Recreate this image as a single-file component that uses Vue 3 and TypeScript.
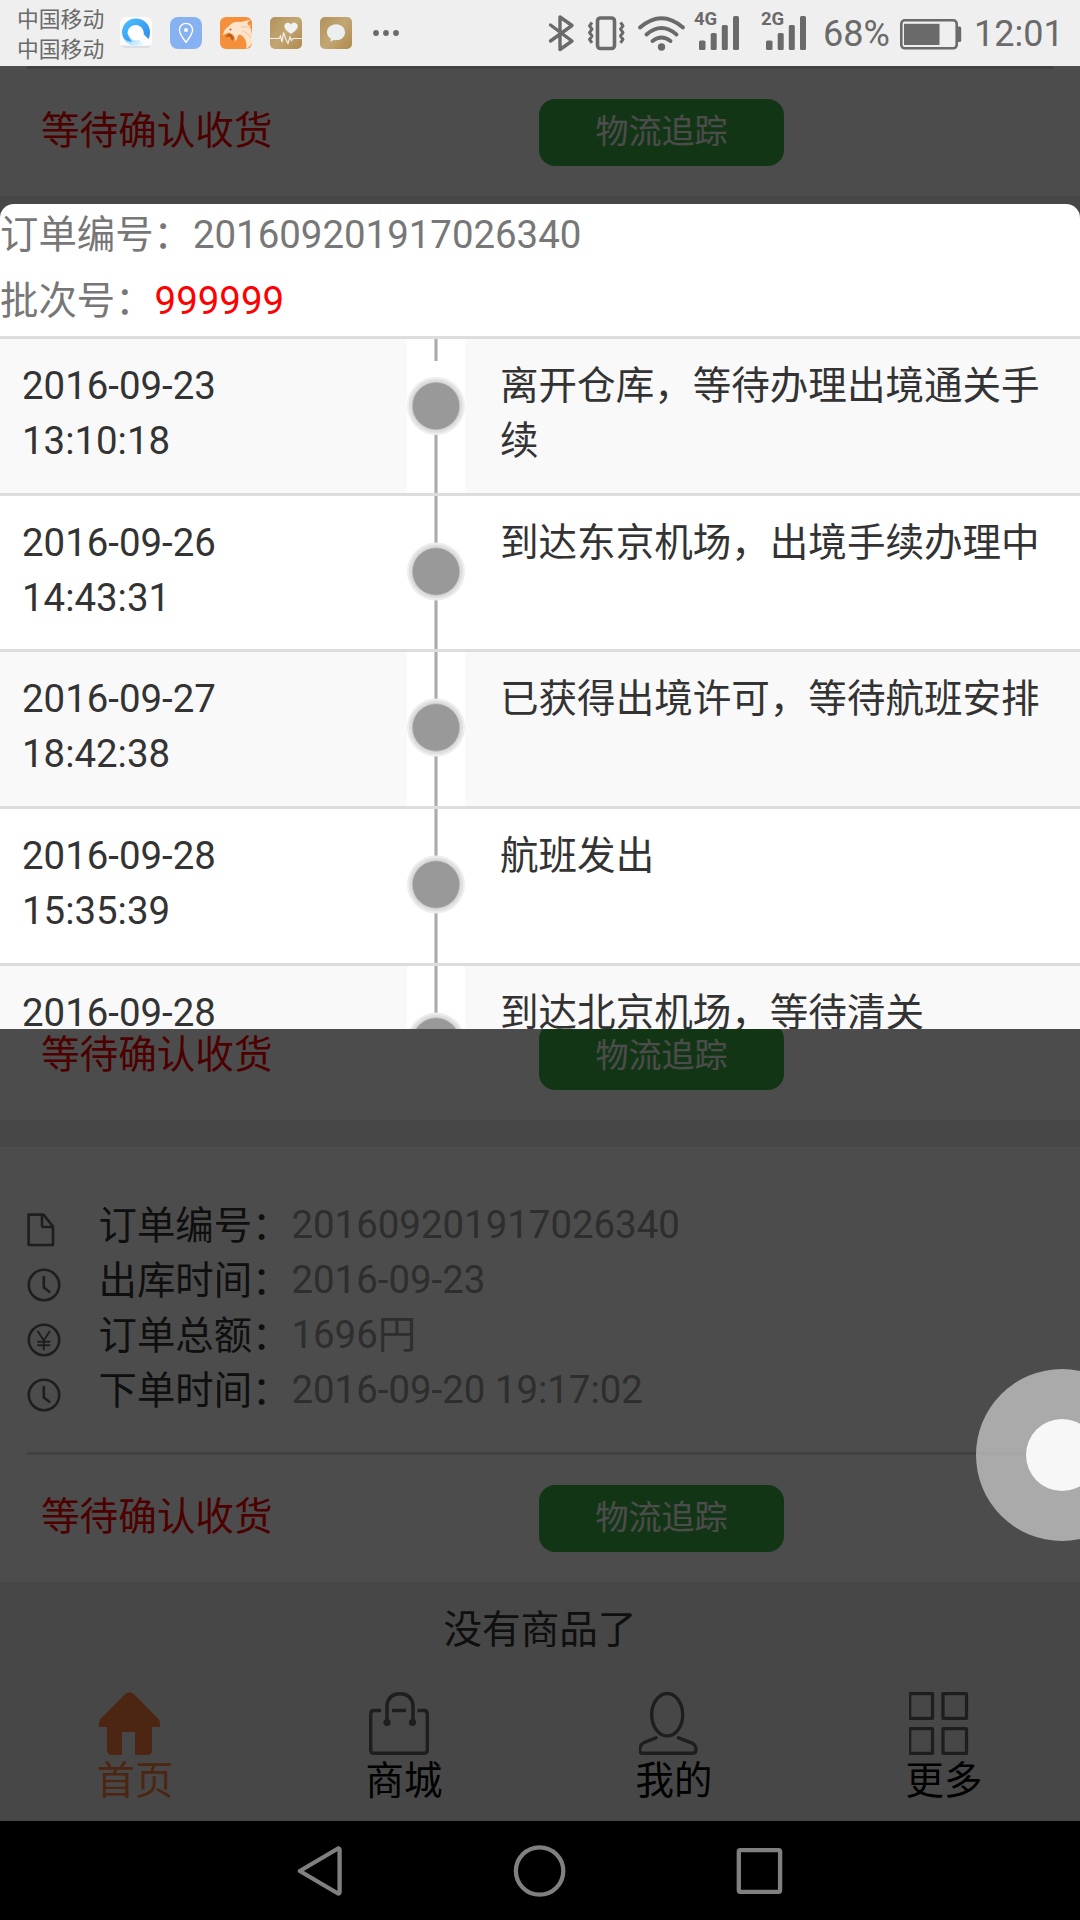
<script setup lang="ts">
interface OrderField {
  icon: 'doc' | 'clock' | 'yen'
  label: string
  value: string
}
interface TrackStep {
  date: string
  time: string
  text: string
}

const statusText = '等待确认收货'
const trackText = '物流追踪'

const fields: OrderField[] = [
  { icon: 'doc', label: '订单编号：', value: '201609201917026340' },
  { icon: 'clock', label: '出库时间：', value: '2016-09-23' },
  { icon: 'yen', label: '订单总额：', value: '1696円' },
  { icon: 'clock', label: '下单时间：', value: '2016-09-20 19:17:02' },
]

const steps: TrackStep[] = [
  { date: '2016-09-23', time: '13:10:18', text: '离开仓库，等待办理出境通关手续' },
  { date: '2016-09-26', time: '14:43:31', text: '到达东京机场，出境手续办理中' },
  { date: '2016-09-27', time: '18:42:38', text: '已获得出境许可，等待航班安排' },
  { date: '2016-09-28', time: '15:35:39', text: '航班发出' },
  { date: '2016-09-28', time: '', text: '到达北京机场，等待清关' },
]
</script>

<template>
  <div class="screen">
    <header class="statusbar">
      <div class="carriers"><span>中国移动</span><span>中国移动</span></div>
      <div class="apps">
        <svg width="32" height="32" viewBox="0 0 32 32">
          <defs>
            <linearGradient id="qb" x1="0" y1="0" x2="1" y2="1">
              <stop offset="0" stop-color="#4cc3fb" /><stop offset="1" stop-color="#2f86f0" />
            </linearGradient>
            <linearGradient id="qt" x1="0" y1="0" x2="1" y2="0.6">
              <stop offset="0" stop-color="#5fc8fb" /><stop offset="1" stop-color="#f4fafe" />
            </linearGradient>
          </defs>
          <rect width="32" height="32" rx="6" fill="#fbfbfb" />
          <path d="M1 28.500Q2 31.500 6 31.500H26Q30 31.500 31 28.500Z" fill="#dcdfe6" />
          <path d="M3 20Q6 28 15 28.800L28 28.800Q20 25 15 20L6 17Z" fill="url(#qt)" />
          <path d="M2 15.500A14 14 0 0 1 30 15.500Q30 18.500 28.500 22L23.500 17A8 8 0 1 0 9 20.500L12 25Q2 24 2 15.500Z" fill="url(#qb)" />
          <circle cx="16" cy="16" r="7.500" fill="#fff" />
        </svg>
        <svg width="32" height="32" viewBox="0 0 32 32">
          <rect width="32" height="32" rx="8" fill="#87b2f2" />
          <path d="M16 25.200C13 21.500 9.400 17 9.400 13a6.600 6.600 0 0 1 13.200 0C22.600 17 19 21.500 16 25.200Z" fill="none" stroke="#fff" stroke-width="1.400" />
          <circle cx="16" cy="13" r="2" fill="#fff" />
        </svg>
        <svg width="32" height="32" viewBox="0 0 32 32">
          <rect width="32" height="32" rx="6" fill="#f68f3a" />
          <path d="M3 18Q4 12 9 9Q13 3.500 21 5L31 2.500Q26 6 28 7.500Q33 12 32 26Q29 31 26 32Q28 24 22 18.500Q19 17 17.500 19Q18 22 15 25Q16 21 13 17.500L9 15.500Q6 16 3 18Z" fill="#fde3cc" />
          <path d="M21 10Q26 11 31 8M23 14Q28 16 31 21" stroke="#fbc091" stroke-width="1" fill="none" />
          <path d="M5 20Q8 16 11 17L14 21L12 24L10 19.500Z" fill="#b85a1c" />
          <circle cx="10.500" cy="12.500" r="1" fill="#c4601c" />
        </svg>
        <svg width="32" height="32" viewBox="0 0 32 32">
          <defs>
            <linearGradient id="gold" x1="0" y1="0.100" x2="1" y2="0.900">
              <stop offset="0" stop-color="#b3945e" /><stop offset="0.500" stop-color="#c2a673" /><stop offset="1" stop-color="#b08d50" />
            </linearGradient>
          </defs>
          <rect width="32" height="32" rx="5" fill="url(#gold)" />
          <path d="M21 17C17 14 14.300 12 14.300 9A3.600 3.600 0 0 1 21 7.500A3.600 3.600 0 0 1 27.800 9C27.800 12 25 14 21 17Z" fill="#f0f2f2" />
          <path d="M0 21.500H9L10.500 19L12 25L13.500 15.500L16 22.500L18 26.500L20 20L21.500 23.500L23 21.500H32" fill="none" stroke="#f2efe8" stroke-width="1.200" />
        </svg>
        <svg width="32" height="32" viewBox="0 0 32 32">
          <rect width="32" height="32" rx="5" fill="url(#gold)" />
          <path d="M16 7.200c5.200 0 9 3.600 9 8.100s-3.800 8-9 8c-1 0-1.800 0-2.600-.3L10.300 25l.7-3.200C8.500 20.300 7 18 7 15.300c0-4.500 3.800-8.100 9-8.100Z" fill="#eceff0" />
        </svg>
      </div>
      <svg class="dots" width="26" height="66" viewBox="373 0 26 66" fill="#6a6a6a">
        <circle cx="376" cy="33" r="2.900" /><circle cx="386" cy="33" r="2.900" /><circle cx="396" cy="33" r="2.900" />
      </svg>
      <svg class="indicators" width="265" height="66" viewBox="545 0 265 66" fill="none" stroke="#6a6a6a">
        <path d="M550.500 25L572 41L560 49.500V17L572 25.500L550.500 41" stroke-width="3.400" stroke-linejoin="round" stroke-linecap="round" />
        <rect x="597.500" y="18" width="17" height="30.500" rx="3" stroke-width="3.600" />
        <path d="M592 22.500l-2.500 3.300 2.500 3.400-2.500 3.400 2.500 3.400-2.500 3.400 2.500 3.500M620.500 22.500l2.500 3.300-2.500 3.400 2.500 3.400-2.500 3.400 2.500 3.400-2.500 3.500" stroke-width="3" stroke-linejoin="round" />
        <path d="M640 27.500Q661.500 9 683 27.500" stroke-width="3.900" stroke-linecap="round" />
        <path d="M646.500 34.500Q661.500 21.500 676.500 34.500" stroke-width="3.900" stroke-linecap="round" />
        <path d="M652.500 41Q661.500 34 670.500 41" stroke-width="3.900" stroke-linecap="round" />
        <g fill="#6a6a6a" stroke="none">
          <circle cx="661.500" cy="47" r="3.700" />
          <rect x="699" y="40.500" width="6.500" height="9.500" rx="1.500" /><rect x="710.700" y="33" width="6" height="17" rx="1.500" />
          <rect x="721.800" y="25" width="6" height="25" rx="1.500" /><rect x="733" y="16" width="6" height="34" rx="1.500" />
          <rect x="766" y="40.500" width="6.500" height="9.500" rx="1.500" /><rect x="777.700" y="33" width="6" height="17" rx="1.500" />
          <rect x="788.800" y="25" width="6" height="25" rx="1.500" /><rect x="800" y="16" width="6" height="34" rx="1.500" />
          <text x="694" y="24.700" class="net">4G</text>
          <text x="761" y="24.700" class="net">2G</text>
        </g>
      </svg>
      <span class="percent">68%</span>
      <svg class="battery" width="62" height="66" viewBox="900 0 62 66">
        <rect x="901.300" y="20.300" width="55.400" height="28" rx="3.500" fill="none" stroke="#6a6a6a" stroke-width="2.600" />
        <rect x="904" y="23.800" width="35.500" height="21.200" fill="#6a6a6a" />
        <rect x="957" y="26.500" width="4.200" height="15.500" rx="1.500" fill="#6a6a6a" />
      </svg>
      <span class="clock">12:01</span>
    </header>

    <main class="page">
      <section class="card">
        <div class="card-foot">
          <span class="state">{{ statusText }}</span>
          <button class="track">{{ trackText }}</button>
        </div>
      </section>
      <div class="covered"></div>
      <section class="card">
        <div class="card-foot">
          <span class="state">{{ statusText }}</span>
          <button class="track">{{ trackText }}</button>
        </div>
      </section>
      <div class="gap"></div>
      <section class="card">
        <div class="fields">
          <div v-for="f in fields" :key="f.label" class="field">
            <svg class="ficon" width="34" height="34" viewBox="0 0 34 34" fill="none" stroke="#666" stroke-width="2.600" stroke-linejoin="round" stroke-linecap="round">
              <path v-if="f.icon === 'doc'" d="M1.600 1.600H16.500L26 13.500V32H1.600ZM15 2V12.500Q15 14 16.500 14H26" />
              <template v-else>
                <circle cx="17" cy="17" r="15.200" />
                <path v-if="f.icon === 'clock'" d="M16.800 9V19.500L22.300 23.800" />
                <path v-else d="M11 8.500L16.800 17.500L22.500 8.500M16.800 17.500V26.500M11 18.800H22.500M11 22.300H22.500" stroke-width="2" />
              </template>
            </svg>
            <span class="flabel">{{ f.label }}</span><span class="fvalue">{{ f.value }}</span>
          </div>
        </div>
        <div class="card-foot">
          <span class="state">{{ statusText }}</span>
          <button class="track">{{ trackText }}</button>
        </div>
      </section>
      <p class="empty">没有商品了</p>
      <nav class="tabs">
        <div class="tab active">
          <svg width="62" height="64" viewBox="0 0 62 64" fill="#ff7f40">
            <path d="M26.500 1.800Q30.500 -1.500 34.500 1.800L59.500 27Q61 29 61 31V35H53V58Q53 63 48 63H36V40H23V63H13Q8 63 8 58V35H0V31Q0 29 1.500 27Z" />
          </svg>
          <span>首页</span>
        </div>
        <div class="tab">
          <svg width="62" height="64" viewBox="0 0 62 64" fill="none" stroke="#666" stroke-width="3.400">
            <path d="M12 18.500H5Q1.700 18.500 1.700 22V58Q1.700 61.300 5 61.300H55Q58.300 61.300 58.300 58V22Q58.300 18.500 55 18.500H48.500M23 18.500H37" />
            <path d="M18 30.500V14Q19 1.700 31 1.700Q43 1.700 44 14V30.500" />
            <g fill="#666" stroke="none"><circle cx="18" cy="30.500" r="3.600" /><circle cx="43.500" cy="30.500" r="3.600" /></g>
          </svg>
          <span>商城</span>
        </div>
        <div class="tab">
          <svg width="62" height="64" viewBox="1.500 0 62 64" fill="none" stroke="#666" stroke-width="3.400" stroke-linecap="round">
            <ellipse cx="29.700" cy="22.700" rx="15.500" ry="21.200" />
            <path d="M18.500 45.800L7 50.300Q2.200 52.500 2.200 58Q2.200 61.300 5.500 61.300H55Q58.500 61.300 58.500 57.500Q58.500 53 54 50.800L41 45.800" />
          </svg>
          <span>我的</span>
        </div>
        <div class="tab">
          <svg width="62" height="64" viewBox="1 0 62 64" fill="none" stroke="#666" stroke-width="3.300" stroke-linejoin="round">
            <path d="M1.700 1.700H24.500V26.300H1.700ZM35 1.700H58.500V26.300H35ZM1.700 36.700H24.500V61.300H1.700ZM35 36.700H58.500V61.300H35Z" />
          </svg>
          <span>更多</span>
        </div>
      </nav>
    </main>

    <footer class="navbar">
      <svg width="1080" height="99" viewBox="0 1821 1080 99" fill="none" stroke="#808080" stroke-width="4.300" stroke-linejoin="round">
        <path d="M299.800 1871L338 1848.500Q339.600 1848.300 339.600 1850V1892Q339.600 1893.800 338 1893.500Z" />
        <circle cx="539.600" cy="1871" r="23.700" />
        <rect x="738.800" y="1850.200" width="41.300" height="41.600" rx="1.500" />
      </svg>
    </footer>

    <div class="mask"></div>

    <div class="modal">
      <div class="modal-head">
        <p>订单编号：<span>201609201917026340</span></p>
        <p>批次号：<em>999999</em></p>
      </div>
      <div v-for="(s, i) in steps" :key="i" class="step" :class="{ odd: i % 2 === 0 }">
        <div class="when">{{ s.date }}<br v-if="s.time" />{{ s.time }}</div>
        <svg class="rail" width="58" height="156" viewBox="0 0 58 156">
          <rect width="58" height="156" fill="#fff" />
          <path :d="i === 0 ? 'M29 0V22M29 90V156' : 'M29 0V156'" stroke="#d8d8d8" stroke-width="4" />
          <path :d="i === 0 ? 'M29 0V22M29 90V156' : 'M29 0V156'" stroke="#acacac" stroke-width="2.400" />
          <circle cx="29" :cy="i === 0 ? 67 : 75.500" r="29" fill="#ededed" />
          <circle cx="29" :cy="i === 0 ? 67 : 75.500" r="26.800" fill="#dedede" />
          <circle cx="29" :cy="i === 0 ? 67 : 75.500" r="24.200" fill="#bdbdbd" />
          <circle cx="29" :cy="i === 0 ? 67 : 75.500" r="23.200" fill="#999" />
        </svg>
        <div class="what">{{ s.text }}</div>
      </div>
    </div>

    <div class="assist"><i></i></div>
  </div>
</template>

<style>
body {
  margin: 0;
}
</style>

<style scoped>
.screen {
  position: relative;
  width: 1080px;
  height: 1920px;
  overflow: hidden;
  background: #efefef;
  font-family: Roboto, 'Noto Sans CJK SC', sans-serif;
  font-size: 38.4px;
  line-height: 55px;
  color: #333;
}
svg {
  display: block;
  flex: none;
}
p {
  margin: 0;
}
.statusbar {
  display: flex;
  align-items: center;
  height: 66px;
  background: #efefef;
  color: #6a6a6a;
}
.carriers {
  display: flex;
  flex-direction: column;
  width: 103px;
  padding: 4px 0 0 17px;
  font-size: 21.8px;
  line-height: 30px;
  white-space: nowrap;
}
.apps {
  display: flex;
  gap: 18px;
}
.dots {
  margin-left: 21px;
}
.indicators {
  margin-left: 146px;
}
.net {
  font: 700 18.500px Roboto, sans-serif;
}
.percent {
  width: 77px;
  padding-top: 2px;
  margin-left: 13px;
  font-size: 36px;
}
.clock {
  padding-top: 2px;
  margin-left: 12px;
  font-size: 36px;
}
.page {
  display: flex;
  flex-direction: column;
  height: 1755px;
}
.card {
  background: #fff;
}
.card-foot {
  display: flex;
  align-items: flex-start;
  box-sizing: border-box;
  height: 130px;
  margin: 0 27px;
  padding: 30px 0 0 14px;
  border-top: 3px solid #dedede;
}
.state {
  width: 498px;
  padding-top: 4px;
  color: #f00;
  font-size: 38.6px;
}
.track {
  width: 245px;
  height: 66.500px;
  padding: 0;
  border: 0;
  border-radius: 16px;
  background: #3fb648;
  color: #fff;
  font-family: inherit;
  font-size: 33px;
  line-height: 66px;
}
.covered {
  height: 794px;
}
.gap {
  height: 27px;
}
.fields {
  padding: 50px 0 35px 27px;
}
.field {
  display: flex;
}
.ficon {
  margin: 16px 37.500px 0 0;
}
.field,
.modal-head p {
  height: 55px;
}
.flabel {
  padding-top: 0.500px;
}
.fvalue {
  margin-left: 1px;
  color: #999;
}
.empty {
  padding-top: 20px;
  text-align: center;
  font-size: 38.6px;
}
.tabs {
  display: flex;
  margin-top: 35px;
  color: #000;
}
.tab {
  width: 270px;
}
.tab svg {
  margin-left: 99px;
}
.tab span {
  display: block;
  margin: -3px 0 0 95.500px;
}
.active {
  color: #ff7f40;
}
.active span {
  margin-left: 96.500px;
}
.navbar {
  height: 99px;
  background: #000;
}
.mask {
  position: absolute;
  top: 66px;
  left: 0;
  width: 1080px;
  height: 1755px;
  background: rgba(0, 0, 0, 0.7);
}
.modal {
  position: absolute;
  top: 204px;
  left: 0;
  width: 1080px;
  height: 825px;
  overflow: hidden;
  border-radius: 14px 14px 0 0;
  background: #fff;
}
.modal-head {
  display: flex;
  flex-direction: column;
  gap: 11px;
  padding: 3px 0 8px;
  color: #777;
}
.modal-head span,
.modal-head em {
  margin-left: 1px;
}
.modal-head em {
  font-style: normal;
  color: #f00;
}
.step {
  display: flex;
  box-sizing: border-box;
  height: 156.700px;
  overflow: hidden;
  border-top: 3px solid #ddd;
}
.odd {
  background: #f9f9f9;
}
.when {
  box-sizing: border-box;
  width: 407px;
  padding: 19px 0 0 22px;
}
.what {
  width: 558px;
  padding: 19px 0 0 35px;
  font-size: 38.56px;
}
.assist {
  position: absolute;
  top: 1369px;
  left: 976px;
  display: flex;
  align-items: center;
  justify-content: center;
  width: 172px;
  height: 172px;
  border-radius: 50%;
  background: rgba(255, 255, 255, 0.53);
}
.assist i {
  width: 72px;
  height: 72px;
  border-radius: 50%;
  background: #f7f7f7;
}
</style>
